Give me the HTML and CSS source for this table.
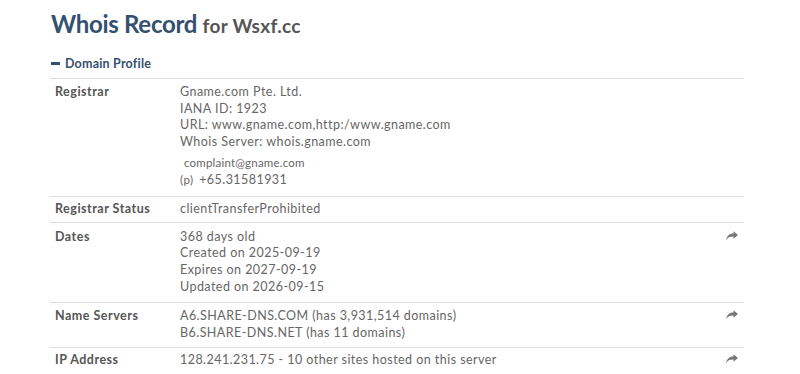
FILE: index.html
```html
<!DOCTYPE html>
<html lang="en">

<head>
    <meta charset="UTF-8">
    <meta name="viewport" content="width=device-width, initial-scale=1.0">
    <title>Whois Record for Wsxf.cc</title>
    <link rel="stylesheet" href="styles.css">
</head>

<body>

    <div class="whois">
        <h1 class="title">Whois Record <span>for Wsxf.cc</span></h1>

        <div class="section-head">
            <span class="minus"></span>Domain Profile
        </div>

        <table class="profile">
            <tr class="multi">
                <th>Registrar</th>
                <td>
                    <div>Gname.com Pte. Ltd.</div>
                    <div>IANA ID: 1923</div>
                    <div>URL: www.gname.com,http:/www.gname.com</div>
                    <div>Whois Server: whois.gname.com</div>
                    <div class="email">complaint@gname.com</div>
                    <div class="phone"><span class="tag">(p)</span> +65.31581931</div>
                </td>
                <td class="act"></td>
            </tr>
            <tr>
                <th>Registrar Status</th>
                <td>clientTransferProhibited</td>
                <td class="act"></td>
            </tr>
            <tr class="multi dates">
                <th>Dates</th>
                <td>
                    <div>368 days old</div>
                    <div>Created on 2025-09-19</div>
                    <div>Expires on 2027-09-19</div>
                    <div>Updated on 2026-09-15</div>
                </td>
                <td class="act">
                    <svg class="share" viewBox="0 0 16 13"><path d="M16 5 L10 0 V3 C4.5 3 1 6 0 12 C2 8.5 5 7.2 10 7.2 V10 Z"/></svg>
                </td>
            </tr>
            <tr class="pair">
                <th>Name Servers</th>
                <td>
                    <div>A6.SHARE-DNS.COM (has 3,931,514 domains)</div>
                    <div>B6.SHARE-DNS.NET (has 11 domains)</div>
                </td>
                <td class="act">
                    <svg class="share" viewBox="0 0 16 13"><path d="M16 5 L10 0 V3 C4.5 3 1 6 0 12 C2 8.5 5 7.2 10 7.2 V10 Z"/></svg>
                </td>
            </tr>
            <tr>
                <th>IP Address</th>
                <td>128.241.231.75 - 10 other sites hosted on this server</td>
                <td class="act">
                    <svg class="share" viewBox="0 0 16 13"><path d="M16 5 L10 0 V3 C4.5 3 1 6 0 12 C2 8.5 5 7.2 10 7.2 V10 Z"/></svg>
                </td>
            </tr>
        </table>
    </div>

</body>

</html>
```

FILE: styles.css
```css
* {
    margin: 0;
    padding: 0;
    box-sizing: border-box;
}

body {
    background: #fff;
    color: #666;
    font-family: Lato, "Open Sans", sans-serif;
}

.whois {
    width: 694px;
    margin-left: 50px;
}

.title {
    font-size: 24px;
    line-height: 30px;
    color: #34506f;
    margin-top: 9px;
    padding-left: 1px;
    letter-spacing: -0.3px;
}

.title span {
    font-size: 19px;
    color: #555;
    letter-spacing: 0.3px;
}

.section-head {
    margin-top: 14px;
    height: 24px;
    line-height: 18px;
    font-size: 12.5px;
    font-weight: bold;
    color: #34506f;
    padding-left: 1px;
    letter-spacing: 0.2px;
    border-bottom: 1px solid #ddd;
}

.minus {
    display: inline-block;
    width: 9px;
    height: 3px;
    background: #34506f;
    vertical-align: middle;
    margin: -2px 5px 0 0;
}

.profile {
    width: 100%;
    border-collapse: collapse;
    font-size: 12.5px;
    line-height: 16.7px;
    letter-spacing: 0.45px;
}

.profile th,
.profile td {
    text-align: left;
    vertical-align: top;
    padding: 4px 0;
    border-bottom: 1px solid #ddd;
}

.profile .multi th,
.profile .multi td {
    padding: 5px 0 7px;
}

.profile .dates th,
.profile .dates td {
    padding-top: 6px;
}

.profile .pair th,
.profile .pair td {
    padding: 5px 0;
}

.profile th {
    width: 130px;
    padding-left: 5px !important;
    font-weight: bold;
    color: #555;
    letter-spacing: 0.5px;
}

.profile tr:last-child th,
.profile tr:last-child td {
    border-bottom: none;
}

.profile .email {
    font-size: 11.5px;
    line-height: 15px;
    letter-spacing: 0.2px;
    padding-left: 4px;
    margin-top: 4px;
}

.profile .phone {
    line-height: 19px;
}

.profile .tag {
    font-size: 11.5px;
    margin-right: 2px;
}

.profile .act {
    width: 18px;
}

.share {
    display: block;
    width: 12px;
    height: 10px;
    margin-top: 2px;
    fill: #777;
}
```
